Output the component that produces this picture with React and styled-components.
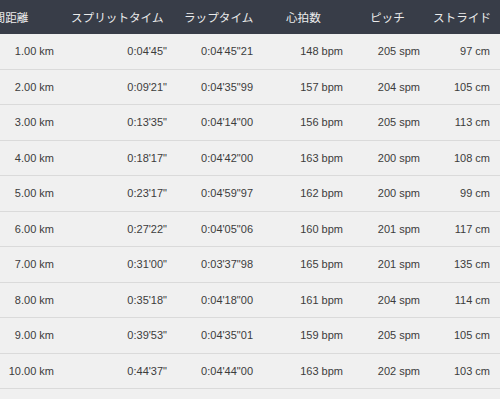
import React from "react";
import styled, { createGlobalStyle } from "styled-components";

const rows = [
  ["1.00 km", "0:04'45\"", "0:04'45\"21", "148 bpm", "205 spm", "97 cm"],
  ["2.00 km", "0:09'21\"", "0:04'35\"99", "157 bpm", "204 spm", "105 cm"],
  ["3.00 km", "0:13'35\"", "0:04'14\"00", "156 bpm", "205 spm", "113 cm"],
  ["4.00 km", "0:18'17\"", "0:04'42\"00", "163 bpm", "200 spm", "108 cm"],
  ["5.00 km", "0:23'17\"", "0:04'59\"97", "162 bpm", "200 spm", "99 cm"],
  ["6.00 km", "0:27'22\"", "0:04'05\"06", "160 bpm", "201 spm", "117 cm"],
  ["7.00 km", "0:31'00\"", "0:03'37\"98", "165 bpm", "201 spm", "135 cm"],
  ["8.00 km", "0:35'18\"", "0:04'18\"00", "161 bpm", "204 spm", "114 cm"],
  ["9.00 km", "0:39'53\"", "0:04'35\"01", "159 bpm", "205 spm", "105 cm"],
  ["10.00 km", "0:44'37\"", "0:04'44\"00", "163 bpm", "202 spm", "103 cm"],
];

// right padding for the figures in each column
const pads = [6, 13, 17, 17, 10, 10];

// header labels and their indent inside the column
const heads = [
  { label: "区間距離", indent: -18 },
  { label: "スプリットタイム", indent: 11 },
  { label: "ラップタイム", indent: 4 },
  { label: "心拍数", indent: 16 },
  { label: "ピッチ", indent: 10 },
  { label: "ストライド", indent: 3 },
];

const GlobalStyle = createGlobalStyle`
  html, body {
    margin: 0;
    padding: 0;
    background: #f0f0f0;
    overflow: hidden;
  }
`;

const Table = styled.div`
  width: 500px;
  height: 399px;
  background: #f0f0f0;
  overflow: hidden;
`;

const Row = styled.div`
  display: grid;
  grid-template-columns: 60px 120px 90px 90px 70px 70px;
  height: ${(p) => (p.$head ? "34px" : "34.5px")};
  align-items: center;
  background: ${(p) => (p.$head ? "#383d48" : "#f0f0f0")};
  border-bottom: ${(p) => (p.$head ? "none" : "1px solid #dadada")};
  overflow: hidden;
`;

const Head = styled.div`
  font-family: "Noto Sans CJK JP", "Noto Sans", sans-serif;
  font-size: 11.6px;
  color: #ececec;
  white-space: nowrap;
  text-indent: ${(p) => p.$indent}px;
  margin-top: -1px;
`;

const Cell = styled.div`
  font-family: "Liberation Sans", Arial, sans-serif;
  font-size: 11px;
  color: #3c3c3c;
  text-align: right;
  white-space: nowrap;
  padding-right: ${(p) => p.$pr}px;
`;

export default function App() {
  return (
    <>
      <GlobalStyle />
      <Table>
        <Row $head>
          {heads.map((h, i) => (
            <Head key={i} $indent={h.indent}>
              {h.label}
            </Head>
          ))}
        </Row>
        {rows.map((r, i) => (
          <Row key={i}>
            {r.map((v, j) => (
              <Cell key={j} $pr={pads[j]}>
                {v}
              </Cell>
            ))}
          </Row>
        ))}
      </Table>
    </>
  );
}
